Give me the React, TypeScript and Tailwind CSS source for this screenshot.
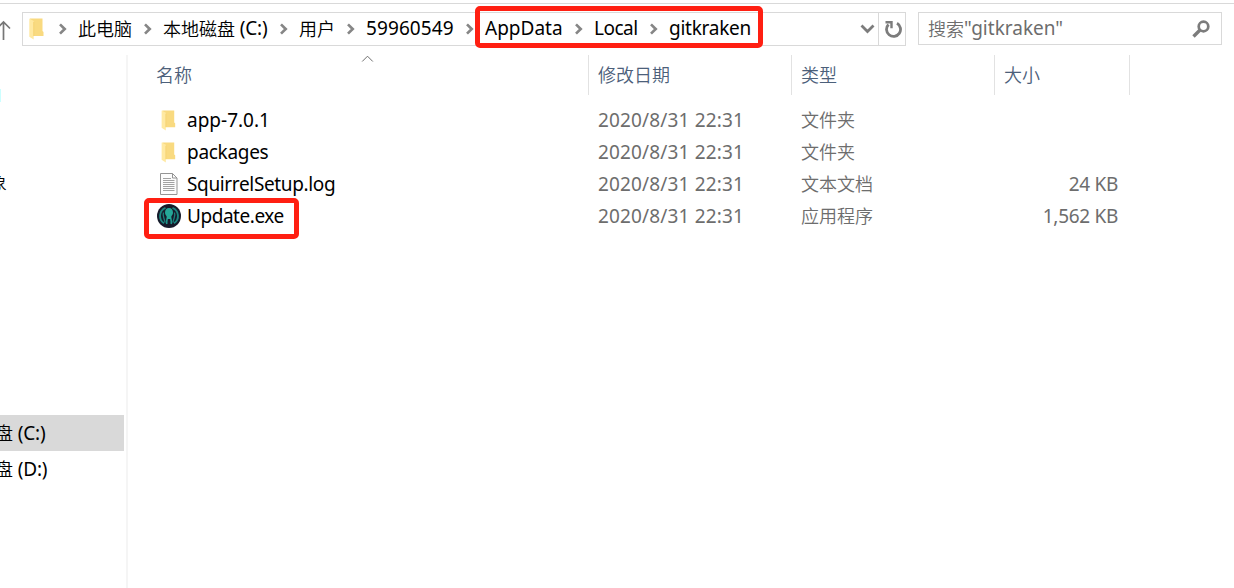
import type { ReactNode } from 'react';

const latin = "font-['Noto_Sans','Noto_Sans_CJK_SC',sans-serif] text-[19px]";
const cjk = "font-['Noto_Sans_CJK_SC',sans-serif] text-[18px] font-[350]";

function Latin({ children, className = '' }: { children: ReactNode; className?: string }) {
  return <span className={`${latin} ${className}`}>{children}</span>;
}

function Cjk({ children, className = '' }: { children: ReactNode; className?: string }) {
  return <span className={`${cjk} ${className}`}>{children}</span>;
}

function Chevron() {
  return (
    <svg className="h-[12px] w-[9px] shrink-0" viewBox="0 0 9 12" fill="none" stroke="#868686" strokeWidth="2.7">
      <path d="M2 1.4 6.700 6 2 10.6" />
    </svg>
  );
}

function Folder({ className }: { className: string }) {
  return (
    <svg className={className} viewBox="0 0 15 22">
      <path d="M1 .5h12.500V13l1 1v4H1z" fill="#f9da80" />
      <path d="M.3.5 4.700 3v18.500L.3 18.700z" fill="#ffe9a2" />
      <path d="M4.700 4v14" stroke="#f1cb64" strokeWidth=".6" />
    </svg>
  );
}

function Document() {
  return (
    <svg className="ml-[4px] h-[22px] w-[18px]" viewBox="0 0 18 22" fill="none">
      <path d="M.5.5h12l4.500 4.500v16.500H.5z" fill="#fcfcfc" stroke="#949494" />
      <path d="M12.500.5v4.500H17" stroke="#949494" />
      <path d="M3 5.500h8M3 7.500h11.500M3 9.500h11.500M3 11.500h11.500M3 13.500h11.500M3 15.500h11.500M3 17.500h11.500" stroke="#a2a2a2" />
    </svg>
  );
}

function Kraken() {
  return (
    <svg className="ml-px size-6" viewBox="0 0 24 24" fill="none">
      <circle cx="12" cy="12" r="12" fill="#161b2b" />
      <path d="M8.500 3.800a8.800 8.800 0 0 0-1.500 15.500M15.500 3.800a8.800 8.800 0 0 1 1.500 15.500" stroke="#1b857e" strokeWidth="1.900" />
      <path d="M6.500 8.500c-1.200 3.500.8 5 1.500 10M17.500 8.500c1.200 3.500-.8 5-1.500 10" stroke="#1b7f7a" strokeWidth="1.300" />
      <path d="M10.300 13.500c0 2-1.100 3-.5 6.500M13.700 13.500c0 2 1.100 3 .5 6.500" stroke="#1e958b" strokeWidth="1.700" />
      <path d="M8 8.800C8 5.500 9.500 4 12 4s4 1.500 4 4.800c0 2.200-1.400 2.700-1.700 3.900l-.3 2.300h-4l-.3-2.300C9.400 11.500 8 11 8 8.800z" fill="#25a798" />
    </svg>
  );
}

const crumbs = [
  { text: '此电脑', zh: true, w: 'w-[85px]', fit: '' },
  { text: '本地磁盘', tail: ' (C:)', zh: true, w: 'w-[136px]', fit: '' },
  { text: '用户', zh: true, w: 'w-[67px]', fit: '' },
  { text: '59960549', w: 'w-[119px]', fit: 'tracking-[0.1px]' },
  { text: 'AppData', w: 'w-[109px]', fit: '' },
  { text: 'Local', w: 'w-[75px]', fit: 'tracking-[-0.5px]' },
  { text: 'gitkraken', w: 'w-[110px]', fit: 'tracking-[-0.25px]' },
];

const files = [
  { icon: <Folder className="ml-[5px] h-[21px] w-[15px]" />, name: 'app-7.0.1', type: '文件夹', size: '', fit: '' },
  { icon: <Folder className="ml-[5px] h-[21px] w-[15px]" />, name: 'packages', type: '文件夹', size: '', fit: 'tracking-[-0.3px]' },
  { icon: <Document />, name: 'SquirrelSetup.log', type: '文本文档', size: '24 KB', fit: 'tracking-[-0.35px]' },
  { icon: <Kraken />, name: 'Update.exe', type: '应用程序', size: '1,562 KB', fit: 'tracking-[-0.45px]' },
];

function AddressBar() {
  return (
    <div className="flex h-[51px] items-start border-t border-[#d9d9d9] pt-2">
      <svg className="mt-[7px] h-[22px] w-[22px] shrink-0" viewBox="0 0 22 22" fill="none" stroke="#777" strokeWidth="1.700">
        <path d="M3.500 21V3M-3 9.500 3.500 3l6.500 6.500" />
      </svg>
      <div className="flex h-[34px] w-[884px] shrink-0 items-center border border-[#d9d9d9]">
        <Folder className="ml-[6px] h-[22px] w-[15px] shrink-0" />
        <div className="ml-[14px] flex flex-1 items-center">
          {crumbs.map((c) => (
            <div key={c.text} className={`flex shrink-0 items-center whitespace-pre text-black ${c.w}`}>
              <Chevron />
              <span className="ml-[11px] flex items-center pb-[2px] leading-8">
                {c.zh ? <Cjk>{c.text}</Cjk> : <Latin className={c.fit}>{c.text}</Latin>}
                {c.tail && <Latin className="tracking-[-0.2px]">{c.tail}</Latin>}
              </span>
            </div>
          ))}
        </div>
        <svg className="mr-[3px] h-[10px] w-[15px]" viewBox="0 0 15 10" fill="none" stroke="#7c7c7c" strokeWidth="2.800">
          <path d="M1.500 1.500l6 6 6-6" />
        </svg>
        <div className="flex h-full w-[27px] items-center justify-center border-l border-[#d9d9d9] pl-[2px]">
          <svg className="h-[18px] w-[18px]" viewBox="0 0 18 18" fill="none" stroke="#7c7c7c" strokeWidth="2.800">
            <path d="M13 3.300A7 7 0 1 1 4.500 4.500" />
            <path d="M1.500 2.300h6v6" strokeWidth="2.400" />
          </svg>
        </div>
      </div>
      <div className="ml-3 flex h-[33px] w-[304px] shrink-0 items-center border border-[#d9d9d9] pr-[11px] pl-[9px] text-[#6d6d6d]">
        <Cjk className="mb-px">搜索</Cjk>
        <Latin>"gitkraken"</Latin>
        <svg className="ml-auto h-[18px] w-[18px]" viewBox="0 0 18 18" fill="none" stroke="#7c7c7c">
          <circle cx="11.500" cy="6.500" r="4.800" strokeWidth="2.700" />
          <path d="M8 10 1.500 16.500" strokeWidth="3.400" />
        </svg>
      </div>
    </div>
  );
}

function Sidebar() {
  return (
    <aside className="relative h-full w-[128px] shrink-0 overflow-hidden border-r-2 border-[#f5f5f5] text-black">
      <div className="mt-[34px] h-[13px] w-px bg-[#ccffff]" />
      <div className="mt-[62px] flex h-9 items-center">
        <Cjk className="ml-[-11px] leading-9">象</Cjk>
      </div>
      <div className="mt-[215px] flex h-9 w-[124px] items-center bg-[#d9d9d9] whitespace-pre">
        <Cjk className="mb-px ml-[-5px]">盘</Cjk>
        <Latin className="tracking-[-0.2px]"> (C:)</Latin>
      </div>
      <div className="flex h-9 w-[124px] items-center whitespace-pre">
        <Cjk className="mb-px ml-[-5px]">盘</Cjk>
        <Latin className="tracking-[-0.2px]"> (D:)</Latin>
      </div>
    </aside>
  );
}

function FileList() {
  return (
    <main className="flex-1">
      <div className="grid h-10 grid-cols-[461px_203px_203px_135px] text-[#4c607a]">
        <div className="flex items-center border-r border-[#e2e2e2] pl-7">
          <Cjk className="mb-px">名称</Cjk>
          <svg className="ml-[169px] h-[7px] w-[13px] self-start" viewBox="0 0 13 7" fill="none" stroke="#6d6d6d">
            <path d="M1.200 6.500l5.300-5.300 5.300 5.300" />
          </svg>
        </div>
        <div className="flex items-center border-r border-[#e2e2e2] pb-px pl-[9px]"><Cjk>修改日期</Cjk></div>
        <div className="flex items-center border-r border-[#e2e2e2] pb-px pl-[9px]"><Cjk>类型</Cjk></div>
        <div className="flex items-center border-r border-[#e2e2e2] pb-px pl-[9px]"><Cjk>大小</Cjk></div>
      </div>
      <div className="mt-[9px]">
        {files.map((f) => (
          <div key={f.name} className="grid h-8 grid-cols-[461px_203px_203px_123px] items-center text-[#6d6d6d]">
            <div className="flex items-center pl-7">
              <div className="flex w-[31px] items-center">{f.icon}</div>
              <Latin className={`text-black ${f.fit}`}>{f.name}</Latin>
            </div>
            <Latin className="pl-[9px] tracking-[0.15px]">2020/8/31 22:31</Latin>
            <Cjk className="pb-[2px] pl-[9px]">{f.type}</Cjk>
            <Latin className="text-right tracking-[-0.3px]">{f.size}</Latin>
          </div>
        ))}
      </div>
    </main>
  );
}

export default function App() {
  return (
    <div className="relative h-[588px] w-[1234px] overflow-hidden bg-white pt-[3px]">
      <AddressBar />
      <div className="flex h-[534px] pt-px">
        <Sidebar />
        <FileList />
      </div>
      <div className="absolute top-[6px] left-[475px] h-[42px] w-[288px] rounded-[5px] border-5 border-[#ff1f12]" />
      <div className="absolute top-[198px] left-[144px] h-[41px] w-[155px] rounded-[5px] border-5 border-[#ff1f12]" />
    </div>
  );
}
